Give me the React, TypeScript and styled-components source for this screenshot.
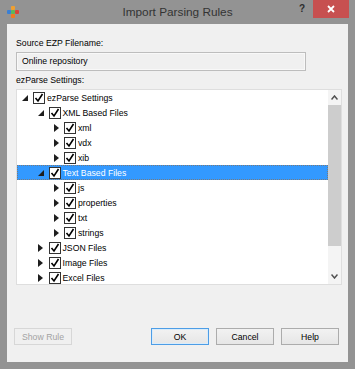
import { createGlobalStyle, styled } from "styled-components";

const GlobalStyle = createGlobalStyle`
  html, body {
    margin: 0;
    padding: 0;
  }
  body {
    font-family: "Liberation Sans", Arial, sans-serif;
  }
`;

type Node = {
  label: string;
  level: number;
  expanded?: boolean;
  selected?: boolean;
};

const nodes: Node[] = [
  { label: "ezParse Settings", level: 0, expanded: true },
  { label: "XML Based Files", level: 1, expanded: true },
  { label: "xml", level: 2 },
  { label: "vdx", level: 2 },
  { label: "xib", level: 2 },
  { label: "Text Based Files", level: 1, expanded: true, selected: true },
  { label: "js", level: 2 },
  { label: "properties", level: 2 },
  { label: "txt", level: 2 },
  { label: "strings", level: 2 },
  { label: "JSON Files", level: 1 },
  { label: "Image Files", level: 1 },
  { label: "Excel Files", level: 1 },
];

const AppIcon = () => (
  <svg width="12" height="12" viewBox="0 0 12 12">
    <rect x="4" y="0" width="4" height="4" rx="1" fill="#f0a030" />
    <rect x="0" y="4" width="4" height="4" rx="1" fill="#3a7fd5" />
    <rect x="4" y="4" width="4" height="4" rx="1" fill="#5cb85c" />
    <rect x="8" y="4" width="4" height="4" rx="1" fill="#d9443a" />
    <rect x="4" y="8" width="4" height="4" rx="1" fill="#f07a20" />
  </svg>
);

const Expander = ({ expanded }: { expanded?: boolean }) => (
  <S.Expander>
    {expanded ? (
      <svg width="6" height="6" viewBox="0 0 6 6">
        <polygon points="6,0 6,6 0,6" fill="#1e1e1e" />
      </svg>
    ) : (
      <svg width="5" height="8" viewBox="0 0 5 8">
        <polygon points="0,0 5,4 0,8" fill="#1e1e1e" />
      </svg>
    )}
  </S.Expander>
);

const Check = () => (
  <S.CheckBox>
    <svg width="10" height="10" viewBox="0 0 10 10">
      <polyline
        points="1.5,5 4,8 8.5,1"
        fill="none"
        stroke="#000"
        strokeWidth="1.6"
      />
    </svg>
  </S.CheckBox>
);

const Chevron = ({ up }: { up?: boolean }) => (
  <svg width="7" height="5" viewBox="0 0 7 5">
    <polyline
      points={up ? "0.5,4.5 3.5,1 6.5,4.5" : "0.5,0.5 3.5,4 6.5,0.5"}
      fill="none"
      stroke="#505050"
      strokeWidth="1.5"
    />
  </svg>
);

export default function App() {
  return (
    <>
      <GlobalStyle />
      <S.Window>
        <S.TitleBar>
          <S.IconSlot>
            <AppIcon />
          </S.IconSlot>
          <S.Title>Import Parsing Rules</S.Title>
          <S.Controls>
            <S.HelpMark>?</S.HelpMark>
            <S.Close>
              <svg width="8" height="8" viewBox="0 0 8 8">
                <path d="M1 1 L7 7 M7 1 L1 7" stroke="#fff" strokeWidth="1.8" />
              </svg>
            </S.Close>
          </S.Controls>
        </S.TitleBar>

        <S.Body>
          <S.Label>Source EZP Filename:</S.Label>
          <S.Input>Online repository</S.Input>
          <S.Label $top={2}>ezParse Settings:</S.Label>

          <S.Tree>
            <S.TreeList>
              {nodes.map((n) => (
                <S.Row key={n.label} $level={n.level} $selected={n.selected}>
                  <Expander expanded={n.expanded} />
                  <Check />
                  <S.RowText>{n.label}</S.RowText>
                </S.Row>
              ))}
            </S.TreeList>
            <S.ScrollBar>
              <S.ScrollArrow>
                <Chevron up />
              </S.ScrollArrow>
              <S.Track>
                <S.Thumb />
              </S.Track>
              <S.ScrollArrow>
                <Chevron />
              </S.ScrollArrow>
            </S.ScrollBar>
          </S.Tree>

          <S.Buttons>
            <S.Button disabled>Show Rule</S.Button>
            <S.Spacer />
            <S.Button $default>OK</S.Button>
            <S.Button>Cancel</S.Button>
            <S.Button>Help</S.Button>
          </S.Buttons>
        </S.Body>
      </S.Window>
    </>
  );
}

const S = {
  Window: styled.div`
    width: 355px;
    height: 369px;
    background: #939393;
    display: flex;
    flex-direction: column;
    font-size: 8.7px;
    color: #000;
  `,

  TitleBar: styled.div`
    height: 24px;
    display: grid;
    grid-template-columns: 1fr auto 1fr;
    align-items: start;
  `,

  IconSlot: styled.div`
    padding: 6px 0 0 7px;
    display: flex;
  `,

  Title: styled.div`
    font-size: 11.8px;
    color: #333;
    line-height: 24px;
    height: 24px;
  `,

  Controls: styled.div`
    display: flex;
    justify-content: flex-end;
    align-items: flex-start;
    padding-right: 6px;
  `,

  HelpMark: styled.div`
    font-size: 10px;
    font-weight: bold;
    color: #2d2d2d;
    line-height: 18px;
    margin-right: 8px;
  `,

  Close: styled.div`
    width: 36px;
    height: 18px;
    background: #c75050;
    display: flex;
    align-items: center;
    justify-content: center;
  `,

  Body: styled.div`
    flex: 1;
    margin: 0 7px 7px;
    background: #f0f0f0;
    padding: 12px 9px 17px;
    display: flex;
    flex-direction: column;
  `,

  Label: styled.div<{ $top?: number }>`
    line-height: 15px;
    height: 15px;
    margin-top: ${(p) => p.$top ?? 0}px;
    margin-bottom: 1px;
  `,

  Input: styled.div`
    width: 290px;
    height: 19px;
    box-sizing: border-box;
    border: 1px solid #bdbdbd;
    box-shadow: inset 0 0 0 1px #f8f8f8;
    background: #f0f0f0;
    padding-left: 5px;
    line-height: 17px;
  `,

  Tree: styled.div`
    height: 196px;
    margin-right: -3px;
    box-sizing: border-box;
    border: 1px solid #dedede;
    background: #fff;
    display: flex;
    overflow: hidden;
  `,

  TreeList: styled.div`
    flex: 1;
    overflow: hidden;
  `,

  Row: styled.div<{ $level: number; $selected?: boolean }>`
    height: 15px;
    box-sizing: border-box;
    display: flex;
    align-items: center;
    padding-left: ${(p) => 2 + p.$level * 15.5}px;
    background: ${(p) => (p.$selected ? "#3399ff" : "transparent")};
    color: ${(p) => (p.$selected ? "#fff" : "#000")};
    border: 1px dotted ${(p) => (p.$selected ? "#7a7a7a" : "transparent")};
  `,

  Expander: styled.div`
    width: 10px;
    height: 10px;
    display: flex;
    align-items: center;
    justify-content: center;
    margin-right: 3px;
  `,

  CheckBox: styled.div`
    width: 12px;
    height: 12px;
    box-sizing: border-box;
    border: 1px solid #333;
    background: #fff;
    display: flex;
    align-items: center;
    justify-content: center;
  `,

  RowText: styled.span`
    margin-left: 2px;
    white-space: nowrap;
  `,

  ScrollBar: styled.div`
    width: 13px;
    background: #f4f4f4;
    display: flex;
    flex-direction: column;
  `,

  ScrollArrow: styled.div`
    height: 15px;
    display: flex;
    align-items: center;
    justify-content: center;
  `,

  Track: styled.div`
    flex: 1;
  `,

  Thumb: styled.div`
    height: 141px;
    background: #cdcdcd;
  `,

  Buttons: styled.div`
    margin-top: auto;
    margin-left: -2px;
    display: flex;
    gap: 7px;
  `,

  Spacer: styled.div`
    flex: 1;
  `,

  Button: styled.button<{ $default?: boolean }>`
    width: 58px;
    height: 17px;
    padding: 0;
    font-family: "Liberation Sans", Arial, sans-serif;
    font-size: 8.7px;
    color: #000;
    background: linear-gradient(#f2f2f2, #e6e6e6);
    border: 1px solid ${(p) => (p.$default ? "#4d9de6" : "#acacac")};
    box-shadow: ${(p) => (p.$default ? "inset 0 0 0 1px #d9ecfb" : "none")};

    &:disabled {
      color: #a3a3a3;
      background: #f0f0f0;
      border-color: #d7d7d7;
    }
  `,
};
